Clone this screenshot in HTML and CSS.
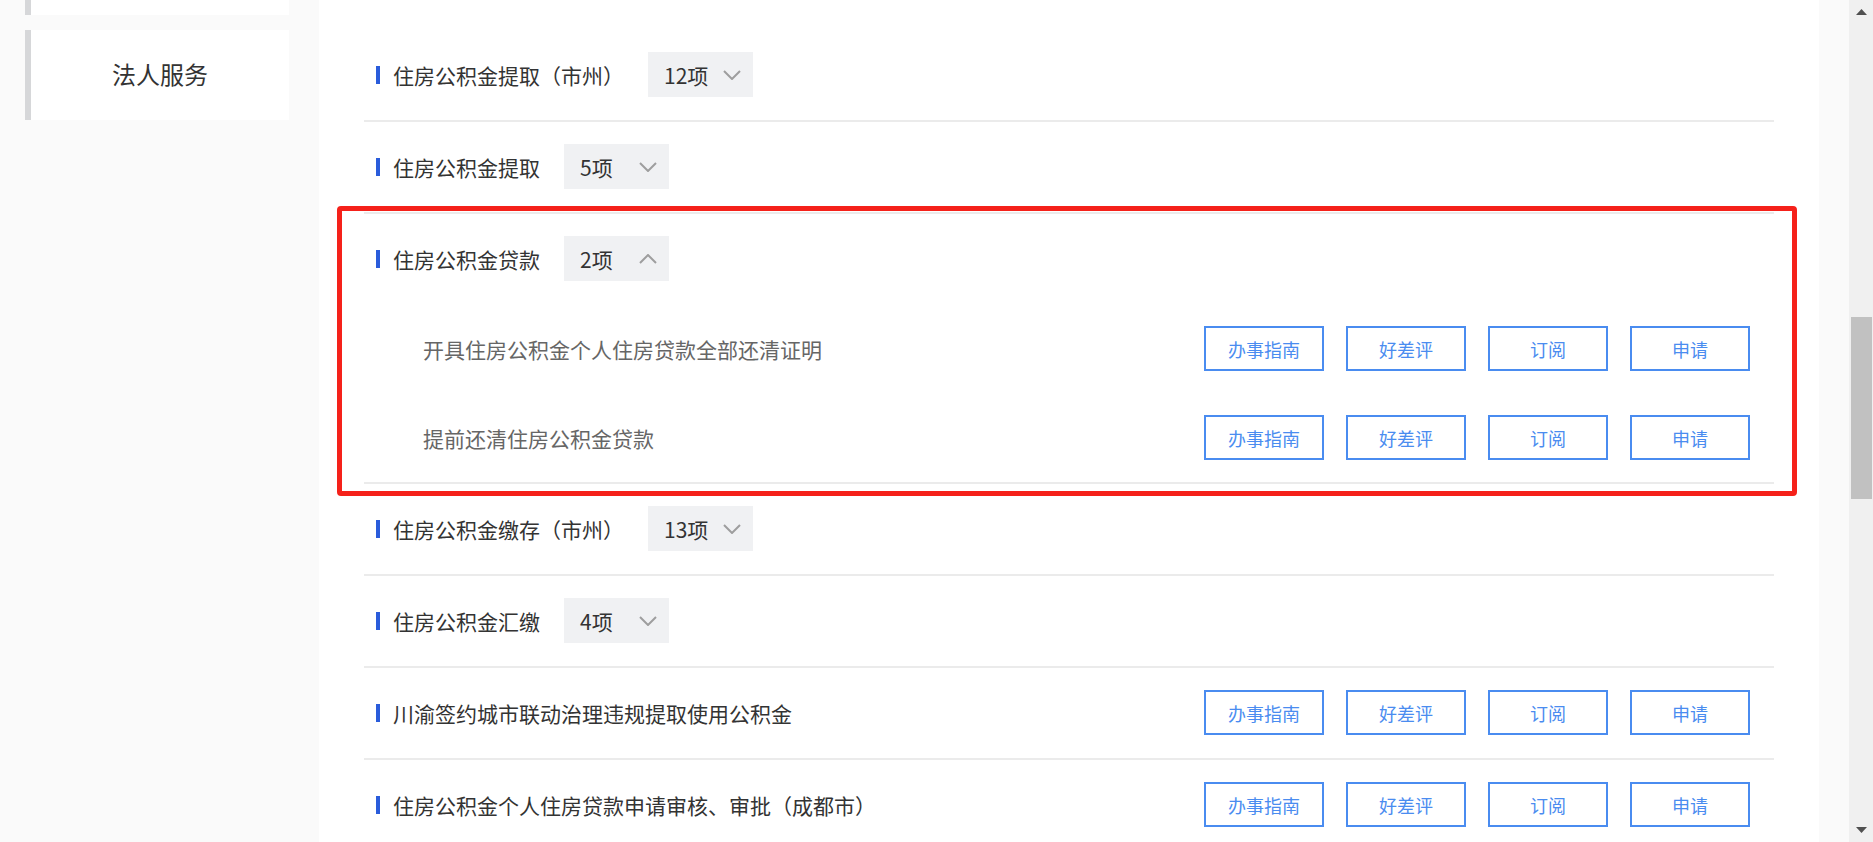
FILE: index.html
```html
<!DOCTYPE html>
<html lang="zh-CN">
<head>
    <meta charset="UTF-8">
    <meta name="viewport" content="width=device-width, initial-scale=1.0">
    <title>住房公积金</title>
    <link rel="stylesheet" href="styles.css">
</head>
<body>
    <div class="page">
        <aside class="side">
            <div class="side-item"></div>
            <div class="side-item">法人服务</div>
        </aside>

        <main class="panel">
            <ul class="matter-list">
                <li class="matter">
                    <div class="matter-head">
                        <span class="matter-title">住房公积金提取（市州）</span>
                        <span class="count">12项
                            <svg class="chev" width="18" height="10" viewBox="0 0 18 10"><polyline points="1,1 9,9 17,1"/></svg>
                        </span>
                    </div>
                </li>
                <li class="matter">
                    <div class="matter-head">
                        <span class="matter-title">住房公积金提取</span>
                        <span class="count">5项
                            <svg class="chev" width="18" height="10" viewBox="0 0 18 10"><polyline points="1,1 9,9 17,1"/></svg>
                        </span>
                    </div>
                </li>
                <li class="matter open">
                    <div class="matter-head">
                        <span class="matter-title">住房公积金贷款</span>
                        <span class="count">2项
                            <svg class="chev" width="18" height="10" viewBox="0 0 18 10"><polyline points="1,9 9,1 17,9"/></svg>
                        </span>
                    </div>
                    <ul class="sub-list">
                        <li class="sub-item">
                            <span class="sub-title">开具住房公积金个人住房贷款全部还清证明</span>
                            <div class="actions">
                                <button class="btn">办事指南</button>
                                <button class="btn">好差评</button>
                                <button class="btn">订阅</button>
                                <button class="btn">申请</button>
                            </div>
                        </li>
                        <li class="sub-item">
                            <span class="sub-title">提前还清住房公积金贷款</span>
                            <div class="actions">
                                <button class="btn">办事指南</button>
                                <button class="btn">好差评</button>
                                <button class="btn">订阅</button>
                                <button class="btn">申请</button>
                            </div>
                        </li>
                    </ul>
                </li>
                <li class="matter">
                    <div class="matter-head">
                        <span class="matter-title">住房公积金缴存（市州）</span>
                        <span class="count">13项
                            <svg class="chev" width="18" height="10" viewBox="0 0 18 10"><polyline points="1,1 9,9 17,1"/></svg>
                        </span>
                    </div>
                </li>
                <li class="matter">
                    <div class="matter-head">
                        <span class="matter-title">住房公积金汇缴</span>
                        <span class="count">4项
                            <svg class="chev" width="18" height="10" viewBox="0 0 18 10"><polyline points="1,1 9,9 17,1"/></svg>
                        </span>
                    </div>
                </li>
                <li class="matter">
                    <div class="matter-head">
                        <span class="matter-title">川渝签约城市联动治理违规提取使用公积金</span>
                        <div class="actions">
                            <button class="btn">办事指南</button>
                            <button class="btn">好差评</button>
                            <button class="btn">订阅</button>
                            <button class="btn">申请</button>
                        </div>
                    </div>
                </li>
                <li class="matter">
                    <div class="matter-head">
                        <span class="matter-title">住房公积金个人住房贷款申请审核、审批（成都市）</span>
                        <div class="actions">
                            <button class="btn">办事指南</button>
                            <button class="btn">好差评</button>
                            <button class="btn">订阅</button>
                            <button class="btn">申请</button>
                        </div>
                    </div>
                </li>
            </ul>
        </main>
    </div>

    <div class="scrollbar">
        <div class="scroll-arrow">
            <svg width="11" height="6" viewBox="0 0 11 6"><polygon points="0,6 5.5,0 11,6"/></svg>
        </div>
        <div class="scroll-track">
            <div class="scroll-thumb"></div>
        </div>
        <div class="scroll-arrow">
            <svg width="11" height="6" viewBox="0 0 11 6"><polygon points="0,0 5.5,6 11,0"/></svg>
        </div>
    </div>
</body>
</html>
```

FILE: styles.css
```css
html, body {
    height: 100%;
}
body {
    margin: 0;
    display: flex;
    height: 842px;
    overflow: hidden;
    background-color: #fafafa;
    font-family: "Noto Sans CJK SC", "Noto Sans", sans-serif;
    color: #333;
}
ul {
    list-style: none;
    margin: 0;
    padding: 0;
}
.page {
    flex: 1;
    display: flex;
    align-items: flex-start;
    gap: 30px;
    padding: 0 30px 0 25px;
    min-width: 0;
}
.side {
    width: 264px;
    flex-shrink: 0;
    margin-top: -75px;
}
.side-item {
    height: 90px;
    margin-bottom: 15px;
    padding-bottom: 3px;
    box-sizing: border-box;
    display: flex;
    align-items: center;
    justify-content: center;
    background: #fff;
    border-left: 6px solid #d6d7d9;
    font-size: 24px;
    color: #333;
}
.panel {
    width: 1500px;
    flex-shrink: 0;
    height: 842px;
    background: #fff;
    padding: 30px 45px 0;
    box-sizing: border-box;
}
.matter {
    border-bottom: 2px solid #ebebeb;
}
.matter.open {
    position: relative;
}
/* highlight frame round the opened group */
.matter.open::after {
    content: "";
    position: absolute;
    top: -8px;
    left: -27px;
    right: -23px;
    bottom: -14px;
    border: 5px solid #f5211a;
    border-radius: 4px;
    pointer-events: none;
}
.matter-head {
    display: flex;
    align-items: center;
    min-height: 45px;
    padding: 22px 24px 23px 12px;
}
.matter-title {
    display: flex;
    align-items: center;
    font-size: 21px;
    color: #333;
    white-space: nowrap;
}
.matter-title::before {
    content: "";
    width: 4px;
    height: 18px;
    margin-right: 13px;
    background: #2a5cdb;
}
.count {
    display: flex;
    align-items: center;
    justify-content: space-between;
    width: 105px;
    height: 45px;
    box-sizing: border-box;
    margin-left: 24px;
    padding: 0 12px 0 16px;
    background: #f0f1f3;
    font-size: 21px;
    color: #333;
}
.chev polyline {
    fill: none;
    stroke: #9e9e9e;
    stroke-width: 2;
}
.sub-item {
    display: flex;
    align-items: center;
    min-height: 45px;
    padding: 22px 24px 22px 59px;
}
.sub-title {
    font-size: 21px;
    color: #666;
}
.actions {
    display: flex;
    gap: 22px;
    margin-left: auto;
}
.btn {
    width: 120px;
    height: 45px;
    border: 2px solid #4a8cf0;
    background: #fff;
    color: #4a8cf0;
    font-family: inherit;
    font-size: 18px;
    padding: 0;
    cursor: pointer;
}
.scrollbar {
    width: 24px;
    flex-shrink: 0;
    display: flex;
    flex-direction: column;
    background: #f0f0f0;
}
.scroll-arrow {
    height: 24px;
    display: flex;
    align-items: center;
    justify-content: center;
}
.scroll-arrow polygon {
    fill: #505050;
}
.scroll-track {
    flex: 1;
}
.scroll-thumb {
    height: 182px;
    margin: 293px 1px 0 2px;
    background: #c1c1c1;
}
```
